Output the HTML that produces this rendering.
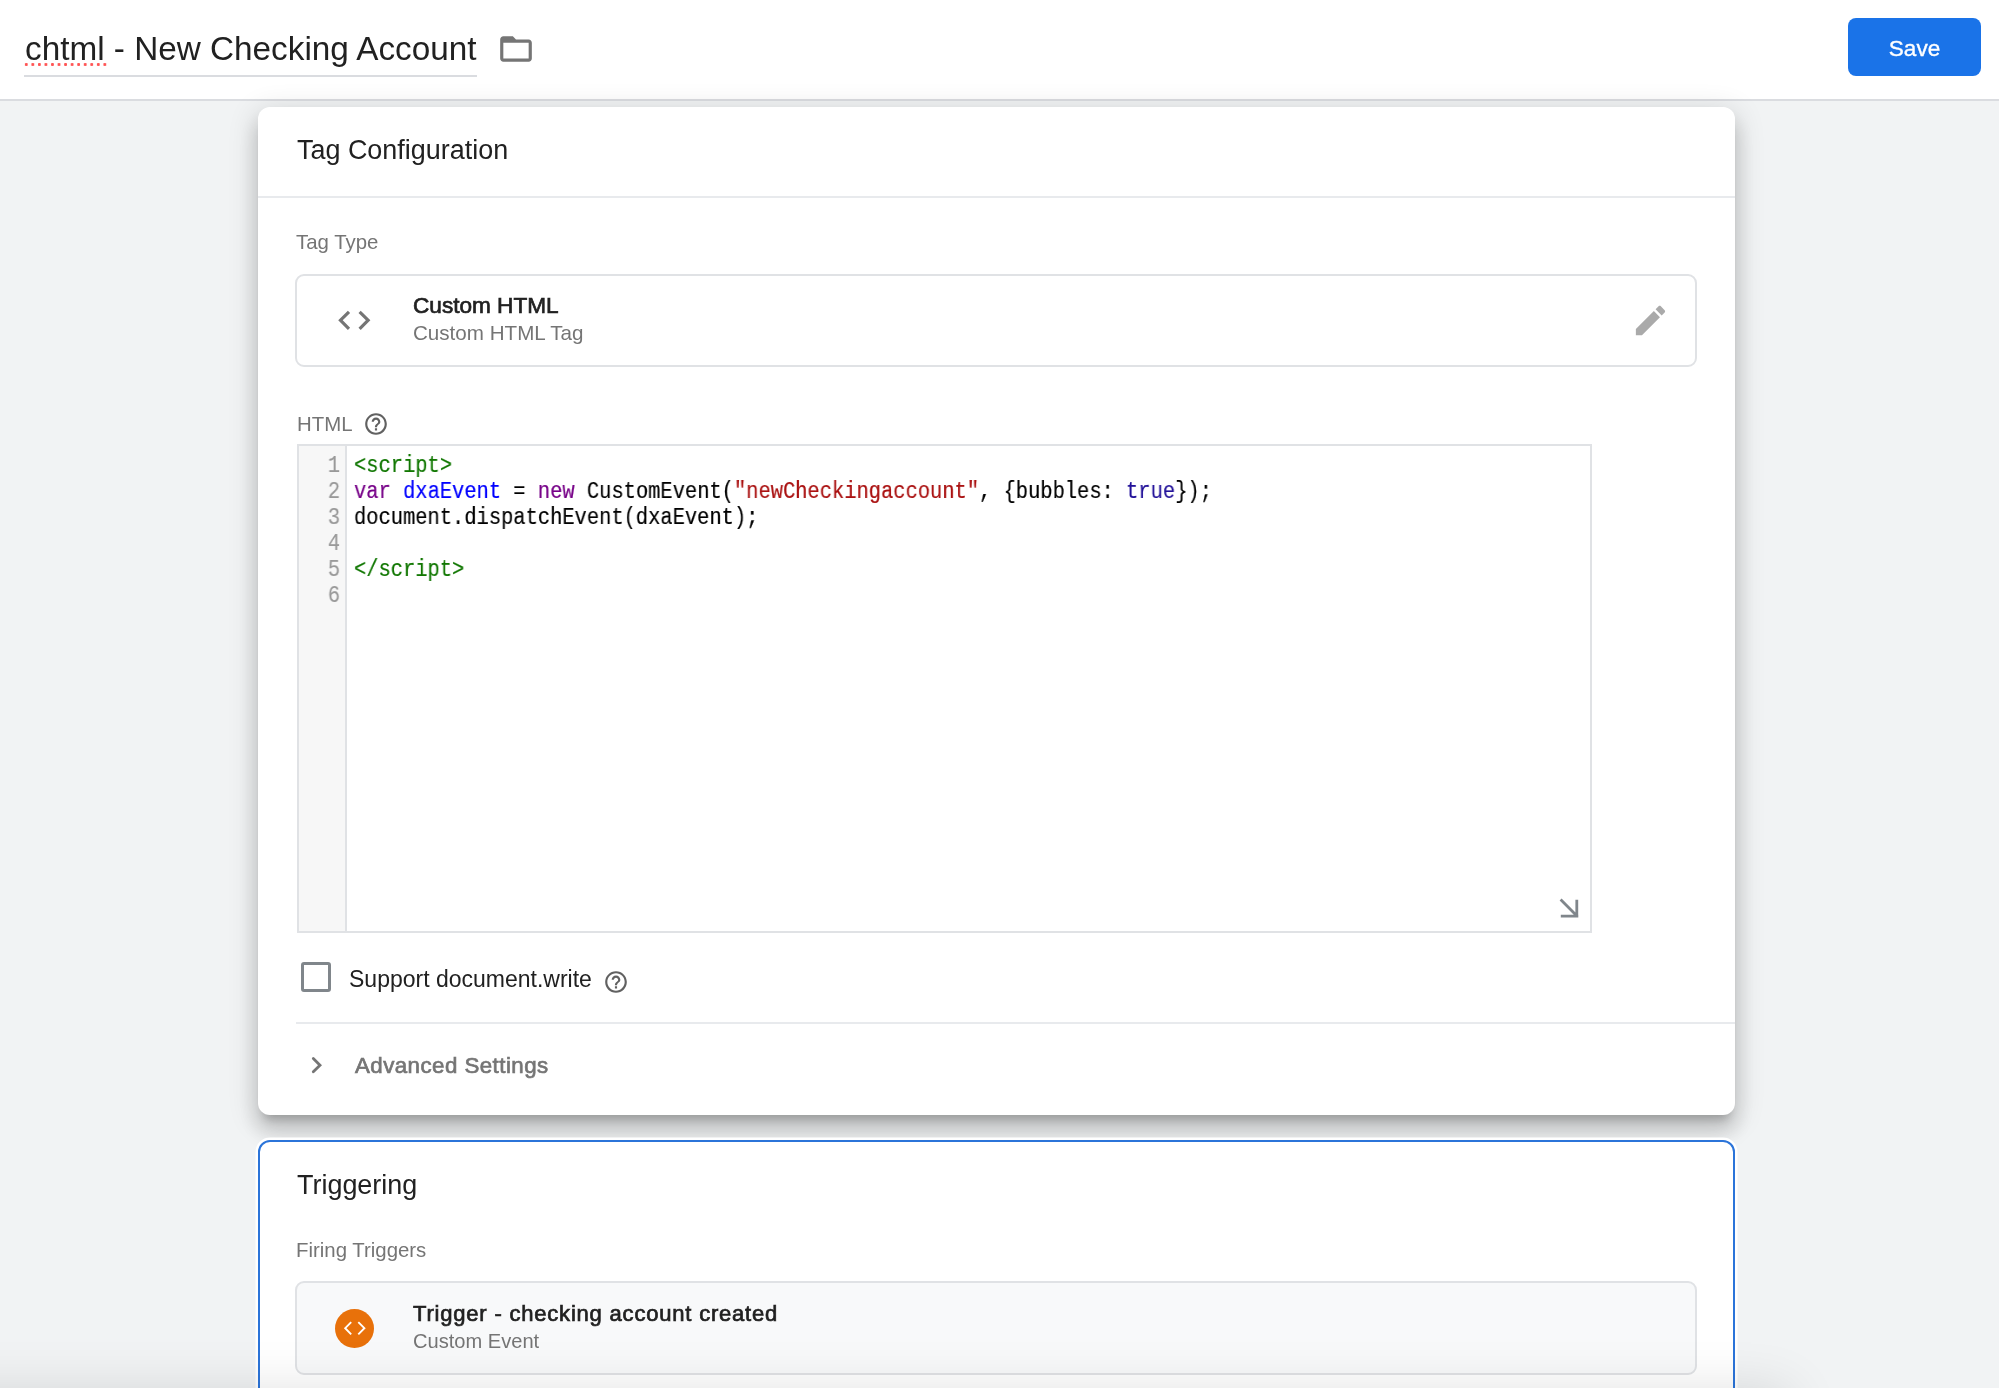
<!DOCTYPE html>
<html><head><meta charset="utf-8">
<style>
*{box-sizing:border-box;margin:0;padding:0}
html,body{width:1999px;height:1388px;overflow:hidden}
body{background:#f1f3f4;font-family:"Liberation Sans",sans-serif;color:#212121;position:relative}
.abs{position:absolute;will-change:transform}
.hdr{left:0;top:0;width:1999px;height:101px;background:#fff;border-bottom:2px solid #dadce0}
.title{left:25px;top:32.4px;font-size:33.3px;line-height:1;color:#212121;white-space:nowrap}
.tline{left:24px;top:75px;width:453px;height:2px;background:#dadce0}
.spell{left:22.5px;top:63px;width:85.3px;height:3px;background-image:radial-gradient(circle,#f55 1.3px,transparent 1.6px);background-size:6.56px 3px;background-repeat:repeat-x}
.save{left:1848px;top:18px;width:133px;height:58px;background:#1a73e8;border-radius:8px}
.savet{left:1848px;width:133px;top:37.8px;color:#fff;font-size:22.6px;-webkit-text-stroke:.35px #fff;line-height:1;text-align:center}
.card{left:258px;width:1477px;background:#fff;border-radius:12px}
.c1{top:107px;height:1008px;box-shadow:0 10px 10px -6px rgba(0,0,0,.2),0 16px 20px 2px rgba(0,0,0,.14),0 6px 28px 4px rgba(0,0,0,.12)}
.c2{top:1140px;height:400px;border:2px solid #2b74d9;box-shadow:0 0 0 2.5px #fff}
.h2{font-size:26.95px;line-height:1;color:#212121;white-space:nowrap}
.lbl{font-size:20.4px;line-height:1;color:#757575;white-space:nowrap}
.box{left:295px;width:1402px;border:2px solid #e0e2e5;border-radius:9px}
.bt{font-size:23px;line-height:1;-webkit-text-stroke:.7px #212121;color:#212121;white-space:nowrap}
.st{font-size:20.6px;line-height:1;color:#757575;white-space:nowrap}
.editor{left:297px;top:444px;width:1295px;height:489px;border:2px solid #e0e2e5;background:#fff}
.gutter{left:0;top:0;width:48px;height:100%;background:#f7f7f7;border-right:2px solid #e0e2e5}
.code{font-family:"Liberation Mono",monospace;font-size:23.5px;line-height:26px;white-space:pre;transform:scaleX(.869);-webkit-text-stroke:.2px}
.ln{left:0;top:7.25px;width:41px;text-align:right;color:#999;transform-origin:100% 0}
.src{left:55px;top:7.25px;color:#000;transform-origin:0 0}
.kw{color:#708}.df{color:#00f}.str{color:#a11}.at{color:#219}.tg{color:#170}
.divl{height:2px;background:#e8eaed}
.root{position:relative;width:1999px;height:1388px;overflow:hidden}
</style></head><body>
<div class="root">
<div class="abs hdr"></div>
<div class="abs title">chtml - New Checking Account</div>
<div class="abs spell"></div>
<div class="abs tline"></div>
<svg class="abs" style="left:497px;top:30px" width="38" height="38" viewBox="0 0 24 24"><path fill="#757575" d="M20 6h-8l-2-2H4c-1.1 0-1.99.9-1.99 2L2 18c0 1.1.9 2 2 2h16c1.1 0 2-.9 2-2V8c0-1.1-.9-2-2-2zm0 12H4V8h16v10z"/></svg>
<div class="abs save"></div><div class="abs savet">Save</div>

<div class="abs card c1"></div>
<div class="abs h2" style="left:297px;top:136.8px">Tag Configuration</div>
<div class="abs divl" style="left:258px;top:196px;width:1477px"></div>
<div class="abs lbl" style="left:296px;top:232.3px">Tag Type</div>
<div class="abs box" style="top:274px;height:93px"></div>
<svg class="abs" style="left:335.4px;top:301.3px" width="38.6" height="38.6" viewBox="0 0 24 24"><path fill="#757575" d="M9.4 16.6L4.8 12l4.6-4.6L8 6l-6 6 6 6 1.4-1.4zm5.2 0l4.6-4.6-4.6-4.6L16 6l6 6-6 6-1.4-1.4z"/></svg>
<div class="abs bt" style="left:413px;top:294.6px;font-size:22.6px">Custom HTML</div>
<div class="abs st" style="left:413px;top:322.6px">Custom HTML Tag</div>
<svg class="abs" style="left:1631px;top:301px" width="39" height="39" viewBox="0 0 24 24"><path fill="#aaa" d="M3 17.25V21h3.75L17.81 9.94l-3.75-3.75L3 17.25zM20.71 7.04c.39-.39.39-1.02 0-1.41l-2.34-2.34c-.39-.39-1.02-.39-1.41 0l-1.83 1.83 3.75 3.75 1.83-1.83z"/></svg>

<div class="abs lbl" style="left:297px;top:413.7px">HTML</div>
<svg class="abs" style="left:363px;top:411px" width="26" height="26" viewBox="0 0 24 24"><path fill="#616161" d="M11 18h2v-2h-2v2zm1-16C6.48 2 2 6.480 2 12s4.48 10 10 10 10-4.48 10-10S17.520 2 12 2zm0 18c-4.41 0-8-3.59-8-8s3.59-8 8-8 8 3.59 8 8-3.59 8-8 8zm0-14c-2.21 0-4 1.79-4 4h2c0-1.1.9-2 2-2s2 .9 2 2c0 2-3 1.75-3 5h2c0-2.25 3-2.5 3-5 0-2.21-1.79-4-4-4z"/></svg>

<div class="abs editor">
  <div class="abs gutter"></div>
  <div class="abs code ln">1
2
3
4
5
6</div>
  <div class="abs code src"><span class="tg">&lt;script&gt;</span>
<span class="kw">var</span> <span class="df">dxaEvent</span> = <span class="kw">new</span> CustomEvent(<span class="str">"newCheckingaccount"</span>, {bubbles: <span class="at">true</span>});
document.dispatchEvent(dxaEvent);

<span class="tg">&lt;/script&gt;</span>
</div>
  <svg class="abs" style="left:1256px;top:448px" width="30" height="30" viewBox="0 0 30 30"><path fill="none" stroke="#80868b" stroke-width="2.8" d="M5.6 5.6L21.5 21.5M5.8 22.2H23.3M21.8 5.8V23.6"/></svg>
</div>

<div class="abs" style="left:301px;top:962px;width:30px;height:30px;border:3px solid #80868b;border-radius:3px"></div>
<div class="abs" style="left:349px;top:967.9px;font-size:23px;line-height:1;color:#212121;white-space:nowrap">Support document.write</div>
<svg class="abs" style="left:603px;top:969px" width="26" height="26" viewBox="0 0 24 24"><path fill="#616161" d="M11 18h2v-2h-2v2zm1-16C6.48 2 2 6.48 2 12s4.48 10 10 10 10-4.48 10-10S17.52 2 12 2zm0 18c-4.41 0-8-3.59-8-8s3.59-8 8-8 8 3.59 8 8-3.59 8-8 8zm0-14c-2.21 0-4 1.79-4 4h2c0-1.1.9-2 2-2s2 .9 2 2c0 2-3 1.75-3 5h2c0-2.25 3-2.5 3-5 0-2.21-1.79-4-4-4z"/></svg>
<div class="abs divl" style="left:296px;top:1022px;width:1439px"></div>
<svg class="abs" style="left:304px;top:1054px" width="24" height="24" viewBox="0 0 24 24"><path fill="none" stroke="#757575" stroke-width="2.8" stroke-linecap="round" d="M9.3 4.6L16 11.2L9.3 17.8"/></svg>
<div class="abs" style="left:355px;top:1055.1px;font-size:22.3px;letter-spacing:.45px;line-height:1;color:#757575;-webkit-text-stroke:.7px #757575;white-space:nowrap">Advanced Settings</div>

<div class="abs card c2"></div>
<div class="abs h2" style="left:297px;top:1171.7px">Triggering</div>
<div class="abs lbl" style="left:296px;top:1240.2px">Firing Triggers</div>
<div class="abs box" style="top:1281px;height:94px;background:#f8f9fa"></div>
<div class="abs" style="left:335px;top:1309px;width:39px;height:39px;border-radius:50%;background:#e8710a"></div>
<svg class="abs" style="left:335px;top:1309px" width="39" height="39" viewBox="0 0 39 39"><path fill="none" stroke="#fff" stroke-width="1.9" d="M16.2 13.1L10.2 19.2L16.2 25.3M23.3 13.1L29.4 19.2L23.3 25.3"/></svg>
<div class="abs bt" style="left:413px;top:1302.9px;font-size:22px;letter-spacing:.8px">Trigger - checking account created</div>
<div class="abs st" style="left:413px;top:1330.9px;font-size:20.1px">Custom Event</div>

<div class="abs" style="left:-200px;top:1390px;width:1990px;height:200px;background:#888;box-shadow:0 0 50px 0 rgba(0,0,0,.12)"></div>
</div>
</body></html>
